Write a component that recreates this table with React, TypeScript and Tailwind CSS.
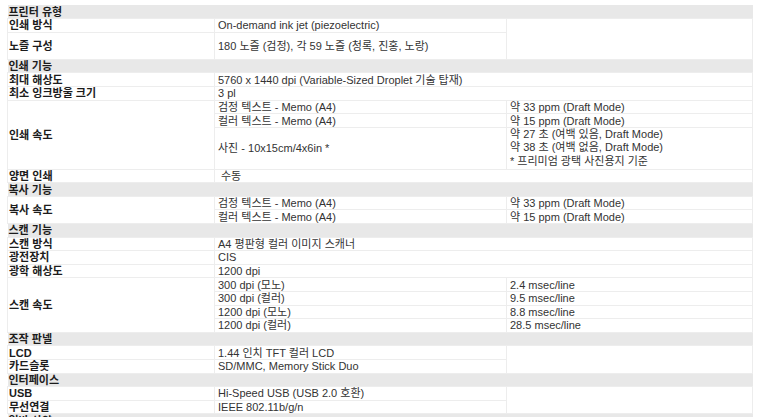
import type { ReactNode } from "react";

const line = "border border-[#ededed]";

const Section = ({ title }: { title: string }) => (
  <tr className="h-[13.6px] bg-[#e8e8e8]">
    <td colSpan={3} className="p-0 pl-[1px] font-bold text-[#1c1c1c]">
      {title}
    </td>
  </tr>
);

const Label = ({ children, rows = 1 }: { children: ReactNode; rows?: number }) => (
  <td rowSpan={rows} className={`${line} p-0 pl-[1px] font-bold text-[#1c1c1c]`}>
    {children}
  </td>
);

const Cell = ({
  children,
  span = 1,
  rows = 1,
  className = "",
}: {
  children?: ReactNode;
  span?: number;
  rows?: number;
  className?: string;
}) => (
  <td colSpan={span} rowSpan={rows} className={`${line} p-0 pl-[3px] text-[#333] ${className}`}>
    {children}
  </td>
);

const Row = ({ children, tall = false }: { children: ReactNode; tall?: boolean }) => (
  <tr className={tall ? "h-[27.2px]" : "h-[13.6px]"}>{children}</tr>
);

export default function App() {
  return (
    <div className="w-[762px] h-[417px] overflow-hidden bg-white pt-[5px] pl-[7px] font-['Liberation_Sans','Noto_Sans_CJK_KR',sans-serif] text-[11px] leading-[12px] whitespace-nowrap">
      <table className="w-[745px] table-fixed border-collapse">
        <colgroup>
          <col className="w-[207px]" />
          <col className="w-[292px]" />
          <col className="w-[246px]" />
        </colgroup>
        <tbody>
          <Section title="프린터 유형" />
          <Row>
            <Label>인쇄 방식</Label>
            <Cell>On-demand ink jet (piezoelectric)</Cell>
            <Cell rows={2} />
          </Row>
          <Row tall>
            <Label>노즐 구성</Label>
            <Cell>180 노즐 (검정), 각 59 노즐 (청록, 진홍, 노랑)</Cell>
          </Row>

          <Section title="인쇄 기능" />
          <Row>
            <Label>최대 해상도</Label>
            <Cell span={2}>5760 x 1440 dpi (Variable-Sized Droplet 기술 탑재)</Cell>
          </Row>
          <Row>
            <Label>최소 잉크방울 크기</Label>
            <Cell span={2}>3 pl</Cell>
          </Row>
          <Row>
            <Label rows={3}>인쇄 속도</Label>
            <Cell>검정 텍스트 - Memo (A4)</Cell>
            <Cell>약 33 ppm (Draft Mode)</Cell>
          </Row>
          <Row>
            <Cell>컬러 텍스트 - Memo (A4)</Cell>
            <Cell>약 15 ppm (Draft Mode)</Cell>
          </Row>
          <tr className="h-[40.8px]">
            <Cell>사진 - 10x15cm/4x6in *</Cell>
            <Cell className="leading-[13.6px]">
              <div>약 27 초 (여백 있음, Draft Mode)</div>
              <div>약 38 초 (여백 없음, Draft Mode)</div>
              <div>* 프리미엄 광택 사진용지 기준</div>
            </Cell>
          </tr>
          <Row>
            <Label>양면 인쇄</Label>
            <Cell span={2} className="pl-[6px]">수동</Cell>
          </Row>

          <Section title="복사 기능" />
          <Row>
            <Label rows={2}>복사 속도</Label>
            <Cell>검정 텍스트 - Memo (A4)</Cell>
            <Cell>약 33 ppm (Draft Mode)</Cell>
          </Row>
          <Row>
            <Cell>컬러 텍스트 - Memo (A4)</Cell>
            <Cell>약 15 ppm (Draft Mode)</Cell>
          </Row>

          <Section title="스캔 기능" />
          <Row>
            <Label>스캔 방식</Label>
            <Cell span={2}>A4 평판형 컬러 이미지 스캐너</Cell>
          </Row>
          <Row>
            <Label>광전장치</Label>
            <Cell span={2}>CIS</Cell>
          </Row>
          <Row>
            <Label>광학 해상도</Label>
            <Cell span={2}>1200 dpi</Cell>
          </Row>
          <Row>
            <Label rows={4}>스캔 속도</Label>
            <Cell>300 dpi (모노)</Cell>
            <Cell>2.4 msec/line</Cell>
          </Row>
          <Row>
            <Cell>300 dpi (컬러)</Cell>
            <Cell>9.5 msec/line</Cell>
          </Row>
          <Row>
            <Cell>1200 dpi (모노)</Cell>
            <Cell>8.8 msec/line</Cell>
          </Row>
          <Row>
            <Cell>1200 dpi (컬러)</Cell>
            <Cell>28.5 msec/line</Cell>
          </Row>

          <Section title="조작 판넬" />
          <Row>
            <Label>LCD</Label>
            <Cell>1.44 인치 TFT 컬러 LCD</Cell>
            <Cell rows={2} />
          </Row>
          <Row>
            <Label>카드슬롯</Label>
            <Cell>SD/MMC, Memory Stick Duo</Cell>
          </Row>

          <Section title="인터페이스" />
          <Row>
            <Label>USB</Label>
            <Cell>Hi-Speed USB (USB 2.0 호환)</Cell>
            <Cell rows={2} />
          </Row>
          <Row>
            <Label>무선연결</Label>
            <Cell>IEEE 802.11b/g/n</Cell>
          </Row>

          <Section title="일반 사양" />
        </tbody>
      </table>
    </div>
  );
}
